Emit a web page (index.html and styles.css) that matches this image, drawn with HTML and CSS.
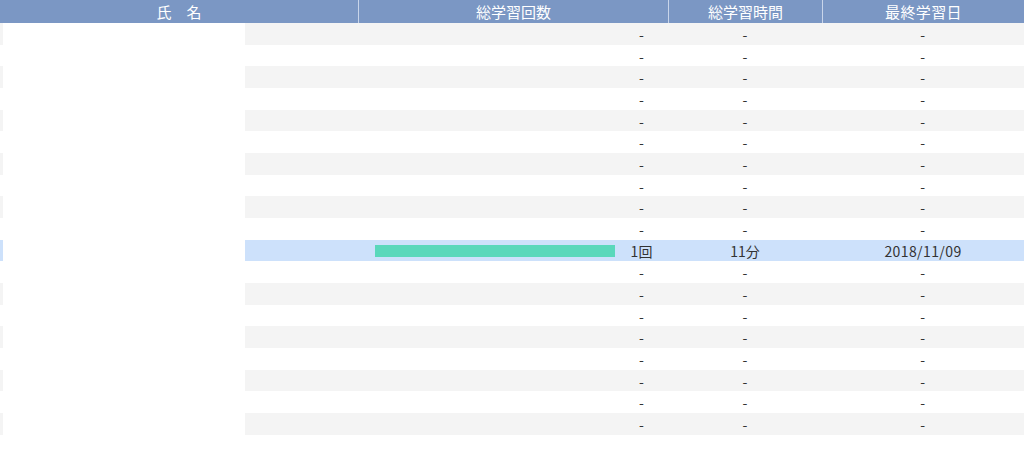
FILE: index.html
```html
<!DOCTYPE html>
<html lang="ja">
<head>
<meta charset="utf-8">
<title>学習状況</title>
<link rel="stylesheet" href="styles.css">
</head>
<body>
<div class="table">
  <div class="row head">
    <div class="cell">氏　名</div>
    <div class="cell">総学習回数</div>
    <div class="cell">総学習時間</div>
    <div class="cell">最終学習日</div>
  </div>
  <div class="row odd"><div class="cell name"></div><div class="cell count"><div class="bar-area"></div><div class="num">-</div></div><div class="cell">-</div><div class="cell">-</div></div>
  <div class="row"><div class="cell name"></div><div class="cell count"><div class="bar-area"></div><div class="num">-</div></div><div class="cell">-</div><div class="cell">-</div></div>
  <div class="row odd"><div class="cell name"></div><div class="cell count"><div class="bar-area"></div><div class="num">-</div></div><div class="cell">-</div><div class="cell">-</div></div>
  <div class="row"><div class="cell name"></div><div class="cell count"><div class="bar-area"></div><div class="num">-</div></div><div class="cell">-</div><div class="cell">-</div></div>
  <div class="row odd"><div class="cell name"></div><div class="cell count"><div class="bar-area"></div><div class="num">-</div></div><div class="cell">-</div><div class="cell">-</div></div>
  <div class="row"><div class="cell name"></div><div class="cell count"><div class="bar-area"></div><div class="num">-</div></div><div class="cell">-</div><div class="cell">-</div></div>
  <div class="row odd"><div class="cell name"></div><div class="cell count"><div class="bar-area"></div><div class="num">-</div></div><div class="cell">-</div><div class="cell">-</div></div>
  <div class="row"><div class="cell name"></div><div class="cell count"><div class="bar-area"></div><div class="num">-</div></div><div class="cell">-</div><div class="cell">-</div></div>
  <div class="row odd"><div class="cell name"></div><div class="cell count"><div class="bar-area"></div><div class="num">-</div></div><div class="cell">-</div><div class="cell">-</div></div>
  <div class="row"><div class="cell name"></div><div class="cell count"><div class="bar-area"></div><div class="num">-</div></div><div class="cell">-</div><div class="cell">-</div></div>
  <div class="row active"><div class="cell name"></div><div class="cell count"><div class="bar-area"><div class="bar" style="width:240px"></div></div><div class="num">1回</div></div><div class="cell">11分</div><div class="cell">2018/11/09</div></div>
  <div class="row"><div class="cell name"></div><div class="cell count"><div class="bar-area"></div><div class="num">-</div></div><div class="cell">-</div><div class="cell">-</div></div>
  <div class="row odd"><div class="cell name"></div><div class="cell count"><div class="bar-area"></div><div class="num">-</div></div><div class="cell">-</div><div class="cell">-</div></div>
  <div class="row"><div class="cell name"></div><div class="cell count"><div class="bar-area"></div><div class="num">-</div></div><div class="cell">-</div><div class="cell">-</div></div>
  <div class="row odd"><div class="cell name"></div><div class="cell count"><div class="bar-area"></div><div class="num">-</div></div><div class="cell">-</div><div class="cell">-</div></div>
  <div class="row"><div class="cell name"></div><div class="cell count"><div class="bar-area"></div><div class="num">-</div></div><div class="cell">-</div><div class="cell">-</div></div>
  <div class="row odd"><div class="cell name"></div><div class="cell count"><div class="bar-area"></div><div class="num">-</div></div><div class="cell">-</div><div class="cell">-</div></div>
  <div class="row"><div class="cell name"></div><div class="cell count"><div class="bar-area"></div><div class="num">-</div></div><div class="cell">-</div><div class="cell">-</div></div>
  <div class="row odd"><div class="cell name"></div><div class="cell count"><div class="bar-area"></div><div class="num">-</div></div><div class="cell">-</div><div class="cell">-</div></div>
</div>
</body>
</html>
```

FILE: styles.css
```css
html, body {
  margin: 0;
  padding: 0;
  background: #ffffff;
}
body {
  font-family: "Noto Sans CJK JP", "Noto Sans", sans-serif;
  font-size: 14px;
  color: #333333;
}
.table {
  width: 1024px;
}
.row {
  display: grid;
  grid-template-columns: 358px 310px 154px 202px;
  height: 21.68px;
  background: #ffffff;
}
.row.odd {
  background: #f4f4f4;
}
.row.active {
  background: #cde1fb;
}
.row.head {
  height: 23px;
  background: #7b97c4;
  color: #ffffff;
  font-size: 15px;
}
.head .cell + .cell {
  border-left: 1px solid #c9d5ea;
}
.cell {
  display: flex;
  align-items: center;
  justify-content: center;
  line-height: 1;
  white-space: nowrap;
}
.name {
  background: linear-gradient(to right, transparent 0, transparent 3px, #ffffff 3px, #ffffff 245px, transparent 245px);
}
.count {
  justify-content: flex-start;
}
.bar-area {
  flex: 1;
  display: flex;
  align-items: center;
  padding-left: 17px;
  height: 100%;
}
.bar {
  height: 12px;
  background: #5ad8bb;
}
.num {
  width: 53px;
  text-align: center;
}
.row .cell:last-child {
  letter-spacing: 0.4px;
}
```
